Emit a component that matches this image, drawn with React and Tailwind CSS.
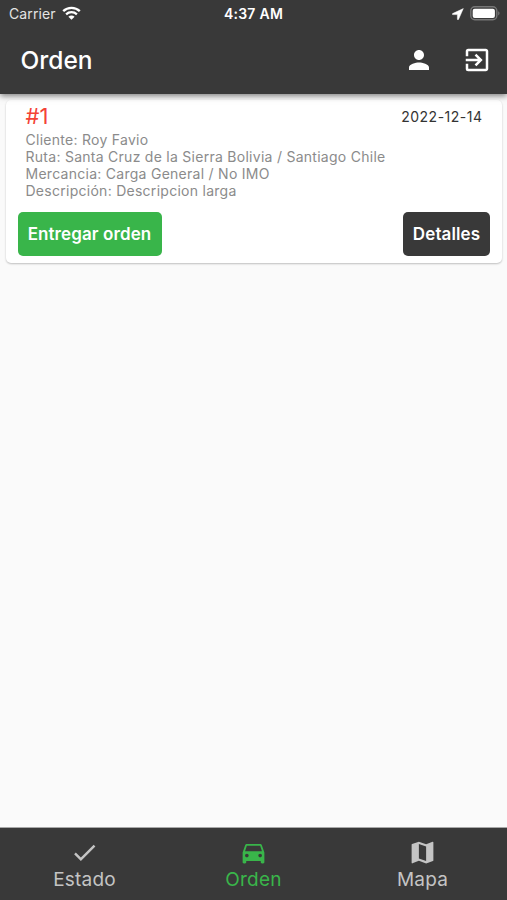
import React, { useState } from 'react';
import { MdPerson, MdExitToApp, MdCheck, MdDirectionsCar, MdMap } from 'react-icons/md';

const order = {
  id: 1,
  date: '2022-12-14',
  details: [
    'Cliente: Roy Favio',
    'Ruta: Santa Cruz de la Sierra Bolivia / Santiago Chile',
    'Mercancia: Carga General / No IMO',
    'Descripción: Descripcion larga',
  ],
};

const tabs = [
  { id: 'estado', label: 'Estado', icon: MdCheck },
  { id: 'orden', label: 'Orden', icon: MdDirectionsCar },
  { id: 'mapa', label: 'Mapa', icon: MdMap },
];

const StatusBar = () => (
  <div className="grid h-[27px] grid-cols-3 items-center pl-[9px] pr-[7px] text-white">
    <div className="flex items-center gap-[6px]">
      <span className="text-[14px] leading-[27px] tracking-[0.1px] text-[#e4e4e4]">Carrier</span>
      <svg className="mb-[2px] h-[14px] w-[19px]" viewBox="0 0 19 14" fill="none">
        <path d="M1.2 5.1C5.8.8 13.2.8 17.8 5.1" stroke="currentColor" strokeWidth="2.4" />
        <path d="M4.1 8.3c3-2.8 7.8-2.8 10.8 0" stroke="currentColor" strokeWidth="2.3" />
        <path d="M6.4 10.7c1.8-1.6 4.4-1.6 6.2 0L9.5 13.8z" fill="currentColor" />
      </svg>
    </div>
    <span className="pr-[2px] text-center text-[14px] font-semibold leading-[27px] tracking-[0.25px]">4:37 AM</span>
    <div className="flex items-center justify-end gap-[6px]">
      <svg className="h-[12px] w-[12px]" viewBox="0 0 12 12" fill="currentColor">
        <path d="M11.3.6.6 5.6c-.5.3-.4 1 .2 1h4.6v4.6c0 .7.8.8 1.1.2z" stroke="currentColor" strokeWidth="0.5" />
      </svg>
      <svg className="h-[15px] w-[30px]" viewBox="0 0 30 15">
        <rect x="0.8" y="0.8" width="26" height="13" rx="4" fill="none" stroke="#777" strokeWidth="1.4" />
        <rect x="2.7" y="2.7" width="22.2" height="9.2" rx="2" fill="#fff" />
        <path d="M28.2 5.2c1.8.6 1.8 3.6 0 4.2z" fill="#777" />
      </svg>
    </div>
  </div>
);

const OrderCard = ({ order }) => (
  <div className="ml-[6px] mr-[5px] mt-[6px] h-[163px] rounded-[5px] bg-white px-[12px] pt-[5px] shadow-[0_1px_2px_rgba(0,0,0,0.24)]">
    <div className="flex h-[26px] items-start justify-between pl-[7.5px] pr-[7.5px]">
      <h2 className="text-[22px] leading-[23px] text-[#f44336]">#{order.id}</h2>
      <span className="text-[14px] leading-[23px] tracking-[0.5px] text-[#333]">{order.date}</span>
    </div>
    <div className="pl-[7.5px] text-[14px] leading-[17px] tracking-[0.27px] text-[#8b8b8b]">
      {order.details.map((line) => (
        <p key={line} className="whitespace-nowrap">{line}</p>
      ))}
    </div>
    <div className="mt-[13px] flex justify-between">
      <button className="h-[44px] w-[144px] whitespace-nowrap rounded-[5px] bg-[#39b54a] pr-px pt-px text-[17px] font-semibold tracking-[0.1px] text-white">
        Entregar orden
      </button>
      <button className="h-[44px] w-[87px] whitespace-nowrap rounded-[5px] bg-[#393939] pt-px text-[17px] font-semibold tracking-[0.1px] text-white">
        Detalles
      </button>
    </div>
  </div>
);

export default function App() {
  const [activeTab, setActiveTab] = useState('orden');

  return (
    <div className="flex h-[900px] w-[507px] flex-col overflow-hidden bg-[#fafafa] font-['Inter','Liberation_Sans',sans-serif]">
      <header className="z-10 h-[94px] shrink-0 bg-[#393939] shadow-[0_2px_6px_rgba(0,0,0,0.5)]">
        <StatusBar />
        <div className="flex h-[65px] items-center justify-between pl-[20.5px] pr-[15px] text-white">
          <h1 className="text-[24.5px] font-medium leading-[30px]">Orden</h1>
          <div className="flex gap-[28px]">
            <button aria-label="Perfil"><MdPerson size={30} /></button>
            <button aria-label="Salir"><MdExitToApp size={30} /></button>
          </div>
        </div>
      </header>

      <main className="flex-1">
        <OrderCard order={order} />
      </main>

      {/* Bottom navigation */}
      <nav className="grid h-[73px] shrink-0 grid-cols-3 border-t border-[#a8a8a8] bg-[#393939]">
        {tabs.map(({ id, label, icon: Icon }) => (
          <button
            key={id}
            onClick={() => setActiveTab(id)}
            className={`flex flex-col items-center pt-[10px] ${
              activeTab === id ? 'text-[#39b54a]' : 'text-[#c4c4c4]'
            }`}
          >
            <Icon size={29} />
            <span className="mt-px text-[19px] leading-[23px] tracking-[0.2px]">{label}</span>
          </button>
        ))}
      </nav>
    </div>
  );
}
